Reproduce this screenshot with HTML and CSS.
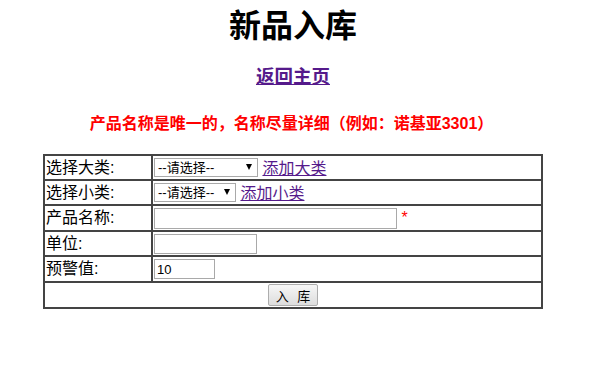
FILE: index.html
```html
<!DOCTYPE html>
<html lang="zh-CN">
<head>
    <meta charset="UTF-8">
    <title>新品入库</title>
    <link rel="stylesheet" href="styles.css">
</head>
<body>
    <div class="page">
        <h1 class="page-title">新品入库</h1>
        <h3 class="back"><a href="#">返回主页</a></h3>
        <h4 class="notice">产品名称是唯一的，名称尽量详细（例如：诺基亚3301）</h4>

        <form class="stock-form">
            <table class="stock-table">
                <tr class="row-a">
                    <td class="label">选择大类:</td>
                    <td class="field">
                        <span class="select-wrap">
                            <select class="sel sel-big">
                                <option>--请选择--</option>
                            </select>
                        </span>
                        <a href="#">添加大类</a>
                    </td>
                </tr>
                <tr class="row-a">
                    <td class="label">选择小类:</td>
                    <td class="field">
                        <span class="select-wrap">
                            <select class="sel sel-small">
                                <option>--请选择--</option>
                            </select>
                        </span>
                        <a href="#">添加小类</a>
                    </td>
                </tr>
                <tr class="row-b">
                    <td class="label">产品名称:</td>
                    <td class="field">
                        <input type="text" class="txt txt-name"> <span class="required">*</span>
                    </td>
                </tr>
                <tr class="row-a">
                    <td class="label">单位:</td>
                    <td class="field"><input type="text" class="txt txt-unit"></td>
                </tr>
                <tr class="row-b">
                    <td class="label">预警值:</td>
                    <td class="field"><input type="text" class="txt txt-warn" value="10"></td>
                </tr>
                <tr class="row-b">
                    <td colspan="2" class="submit-cell">
                        <button type="submit" class="submit-btn">入 库</button>
                    </td>
                </tr>
            </table>
        </form>
    </div>
</body>
</html>
```

FILE: styles.css
```css
* {
    box-sizing: border-box;
}

body {
    margin: 0;
    background: #fff;
    color: #000;
    font-family: "Liberation Sans", "Noto Sans CJK SC", sans-serif;
}

.page {
    width: 586px;
    text-align: center;
}

.page-title {
    margin: 6px 0 0;
    font-size: 32px;
    line-height: 40px;
    font-weight: bold;
}

.back {
    margin: 19px 0 0;
    font-size: 18.5px;
    line-height: 24px;
}

.back a {
    color: #551a8b;
}

.notice {
    margin: 25px 0 0;
    padding-right: 3px;
    font-size: 16px;
    line-height: 20px;
    color: #f00;
}

.stock-form {
    margin-top: 20px;
}

.stock-table {
    width: 500px;
    margin: 0 auto;
    border: 1px solid #444;
    border-spacing: 0;
    text-align: left;
    font-size: 16px;
}

.stock-table td {
    border: 1px solid #444;
    padding: 0 1px;
    line-height: 20px;
}

.row-a td {
    height: 25px;
}

.row-b td {
    height: 26px;
}

.label {
    width: 108px;
}

.field a {
    color: #551a8b;
    vertical-align: -2px;
}

.select-wrap {
    position: relative;
    display: inline-block;
    vertical-align: middle;
}

.select-wrap::after {
    content: "";
    position: absolute;
    right: 6px;
    top: 7px;
    border-left: 3.5px solid transparent;
    border-right: 3.5px solid transparent;
    border-top: 6px solid #000;
    pointer-events: none;
}

.sel {
    appearance: none;
    -webkit-appearance: none;
    height: 19px;
    margin: 0;
    padding: 0 0 0 3px;
    border: 1px solid #a9a9a9;
    border-radius: 0;
    background: #fff;
    font-family: "Liberation Sans", "Noto Sans CJK SC", sans-serif;
    font-size: 13px;
    line-height: 17px;
    color: #000;
}

.sel-big {
    width: 104px;
}

.sel-small {
    width: 82px;
}

.txt {
    height: 21px;
    margin: 0;
    padding: 1px 2px;
    border: 1px solid #a9a9a9;
    font-family: "Liberation Sans", "Noto Sans CJK SC", sans-serif;
    font-size: 13px;
    vertical-align: middle;
}

.txt-name {
    width: 243px;
}

.txt-unit {
    width: 103px;
    height: 20px;
}

.txt-warn {
    width: 61px;
    height: 20px;
}

.required {
    color: #f00;
    vertical-align: middle;
}

.submit-cell {
    text-align: center;
}

.submit-btn {
    width: 50px;
    height: 22px;
    padding: 0;
    border: 1px solid #adadad;
    border-radius: 2px;
    background: linear-gradient(#f6f6f6, #dddddd);
    font-family: "Liberation Sans", "Noto Sans CJK SC", sans-serif;
    font-size: 13px;
    word-spacing: 5px;
    color: #000;
    vertical-align: middle;
}
```
